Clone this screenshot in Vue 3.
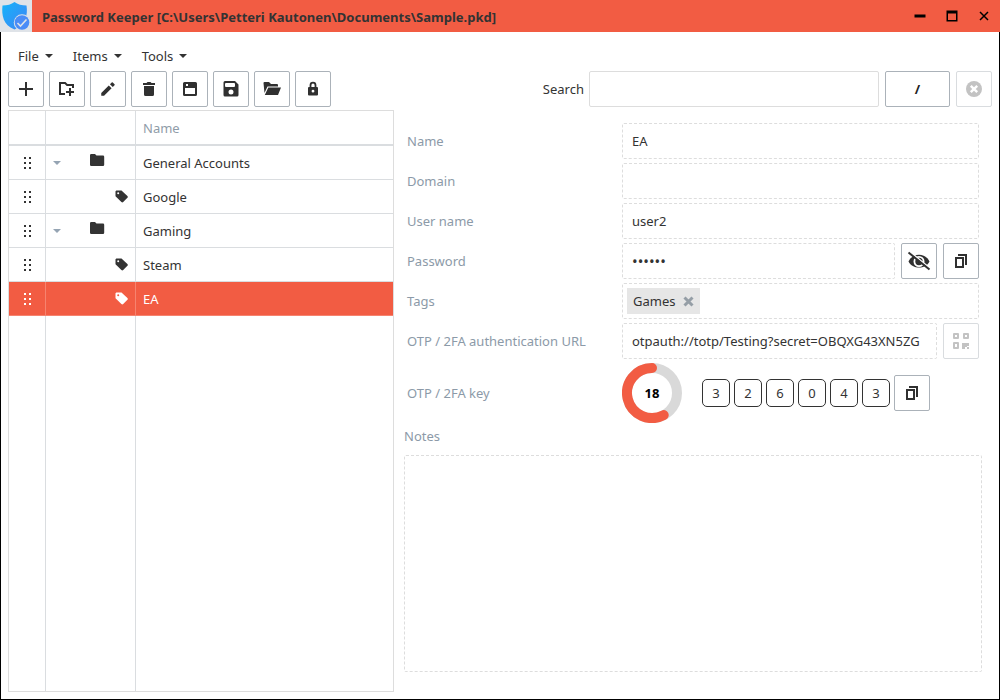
<script setup>
import { ref } from 'vue'

const menus = ['File', 'Items', 'Tools']
const tools = [
  { name: 'Add item', box: 20, size: 20, d: 'M9 3h2v6h6v2h-6v6H9v-6H3V9h6z' },
  { name: 'Add category', box: 20, size: 20, d: 'M2 3h6.500l2 2H17v4h-2V7H9.700l-2-2H4v9h4v2H2zM12 9h2v3h3v2h-3v3h-2v-3H9v-2h3z' },
  { name: 'Edit', box: 24, size: 18, d: 'M3 17.25V21h3.75L16.8 10.95 13.05 7.2 3 17.25zM20.7 7.05a1 1 0 0 0 0-1.4l-2.35-2.35a1 1 0 0 0-1.4 0l-2.35 2.35 3.75 3.75z' },
  { name: 'Delete', box: 20, size: 20, d: 'M4 4h3.500l1-1h3l1 1H16v2H4zM5 7h10v8.500a1.500 1.500 0 0 1-1.500 1.500h-7A1.500 1.500 0 0 1 5 15.500z' },
  { name: 'Save', box: 20, size: 20, d: 'M4.500 3h11A1.500 1.500 0 0 1 17 4.500v11a1.500 1.500 0 0 1-1.500 1.500h-11A1.500 1.500 0 0 1 3 15.500v-11A1.500 1.500 0 0 1 4.500 3zM5 9v6h10V9zM6 5v2h2V5z' },
  { name: 'Save as', box: 20, size: 20, d: 'M4 2h10l3.500 3.500V16a1.500 1.500 0 0 1-1.500 1.500H4A1.500 1.500 0 0 1 2.500 16V3.500A1.500 1.500 0 0 1 4 2zM5 4a1 1 0 0 0-1 1v2a1 1 0 0 0 1 1h8a1 1 0 0 0 1-1V5a1 1 0 0 0-1-1zM10 10.500a2.500 2.500 0 1 0 0 5 2.500 2.500 0 0 0 0-5z' },
  { name: 'Open', box: 20, size: 20, d: 'M1.500 4A1 1 0 0 1 2.500 3H7l2 2h6a1 1 0 0 1 1 1v1.500H5.500L2.500 14zM6.300 8.500H19L16 16H2.800z' },
  { name: 'Lock', box: 20, size: 20, d: 'M6.600 8V6.200a3.400 3.400 0 0 1 6.800 0V8h.6a1 1 0 0 1 1 1v6.500a1 1 0 0 1-1 1H6a1 1 0 0 1-1-1V9a1 1 0 0 1 1-1zM8.400 8h3.200V6.200a1.600 1.600 0 0 0-3.200 0zM10 10.800a1.400 1.400 0 1 0 0 2.800 1.400 1.400 0 0 0 0-2.800z' }
]
const rows = [
  { name: 'General Accounts', folder: true },
  { name: 'Google' },
  { name: 'Gaming', folder: true },
  { name: 'Steam' },
  { name: 'EA', selected: true }
]
const digits = ['3', '2', '6', '0', '4', '3']
const search = ref('')
const entry = ref({
  name: 'EA',
  domain: '',
  user: 'user2',
  password: 'secret',
  url: 'otpauth://totp/Testing?secret=OBQXG43XN5ZG',
  notes: ''
})
</script>

<template>
  <div class="window">
    <header class="titlebar">
      <span class="logo">
        <svg width="32" height="32" viewBox="0 0 32 32">
          <defs>
            <linearGradient id="shield" x1="0" y1="0" x2="1" y2="1">
              <stop offset="0" stop-color="#14b4fa" />
              <stop offset="1" stop-color="#4183f5" />
            </linearGradient>
          </defs>
          <path d="M14.500 2C11.500 4.500 7 5.500 2.500 5.500C1.500 15 3 25 14.500 29.500C25.500 25 28 15 26.500 5.500C22 5.500 17.500 4.500 14.500 2z" fill="url(#shield)" />
          <circle cx="22" cy="22.500" r="8.200" fill="#dfe3e8" />
          <circle cx="22" cy="22.500" r="7.300" fill="#4a8cf7" />
          <path class="stroke" d="M17.500 23l3 3 6-6.500" stroke="#dfe3e8" stroke-width="1.600" />
        </svg>
      </span>
      <h1>Password Keeper [C:\Users\Petteri Kautonen\Documents\Sample.pkd]</h1>
      <button class="sys" aria-label="Minimize"><svg width="12" height="12"><path d="M0.500 4.500h11v3h-11z" /></svg></button>
      <button class="sys" aria-label="Maximize"><svg width="12" height="12"><path d="M.5 .5h11v11H.5zM2 3.500v6.500h8v-6.500z" fill-rule="evenodd" /></svg></button>
      <button class="sys" aria-label="Close"><svg width="12" height="12"><path class="stroke" d="M2 2l8 8M10 2l-8 8" stroke="#000" stroke-width="1.500" /></svg></button>
    </header>

    <main class="body">
      <nav class="menu">
        <button v-for="m in menus" :key="m">{{ m }}<span class="caret"></span></button>
      </nav>

      <div class="toolbar">
        <button v-for="t in tools" :key="t.name" class="btn" :aria-label="t.name">
          <svg :width="t.size" :height="t.size" :viewBox="`0 0 ${t.box} ${t.box}`"><path :d="t.d" fill-rule="evenodd" /></svg>
        </button>
        <label class="search-label" for="search">Search</label>
        <input id="search" v-model="search" class="search" type="text" />
        <button class="btn slash">/</button>
        <button class="btn off" aria-label="Clear search" disabled>
          <svg width="16" height="16" viewBox="0 0 16 16"><circle cx="8" cy="8" r="8" /><path d="M4.800 4.800l6.400 6.400M11.200 4.800l-6.400 6.400" stroke="#fff" stroke-width="2.400" /></svg>
        </button>
      </div>

      <div class="panes">
        <div class="tree">
          <table>
            <colgroup><col class="c-drag" /><col class="c-icon" /><col /></colgroup>
            <thead><tr><th></th><th></th><th>Name</th></tr></thead>
            <tbody>
              <tr v-for="r in rows" :key="r.name" :class="{ selected: r.selected }">
                <td>
                  <svg class="grip" width="8" height="14" viewBox="0 0 8 14"><path d="M1 1h2v2H1zM6 1h2v2H6zM1 6h2v2H1zM6 6h2v2H6zM1 11h2v2H1zM6 11h2v2H6z" /></svg>
                </td>
                <td>
                  <div v-if="r.folder" class="kind">
                    <span class="caret pale"></span>
                    <svg width="15" height="20" viewBox="0 0 15 20"><path d="M0 2.200A1.200 1.200 0 0 1 1.200 1H5l1.500 1.500h6.500A1.200 1.200 0 0 1 14.200 3.700v8.100a1.200 1.200 0 0 1-1.200 1.200H1.200A1.200 1.200 0 0 1 0 11.800z" /></svg>
                  </div>
                  <div v-else class="kind leaf">
                    <svg width="13" height="13" viewBox="0 0 13 13"><path d="M1.300.5h5.200L12.400 6a1.300 1.300 0 0 1 0 1.800l-4.200 4.300a1.300 1.300 0 0 1-1.800 0L.5 6.300V1.300zM3.200 2.300a1 1 0 1 0 0 2 1 1 0 0 0 0-2z" fill-rule="evenodd" /></svg>
                  </div>
                </td>
                <td>{{ r.name }}</td>
              </tr>
              <tr class="rest"><td></td><td></td><td></td></tr>
            </tbody>
          </table>
        </div>

        <form class="detail" @submit.prevent>
          <div class="fields">
            <label for="name">Name</label>
            <div class="line"><input id="name" v-model="entry.name" type="text" /></div>
            <label for="domain">Domain</label>
            <div class="line"><input id="domain" v-model="entry.domain" type="text" /></div>
            <label for="user">User name</label>
            <div class="line"><input id="user" v-model="entry.user" type="text" /></div>
            <label for="password">Password</label>
            <div class="line">
              <input id="password" v-model="entry.password" type="password" />
              <button class="btn" type="button" aria-label="Show password">
                <svg width="24" height="20" viewBox="0 0 24 20"><path d="M1.500 10.500C5.500 1.500 18.500 1.500 22.500 10.500C18.500 18.500 5.500 18.500 1.500 10.500z" /><circle class="stroke" cx="12" cy="10.500" r="4.600" stroke="#fff" stroke-width="1.800" /><path d="M2.500 .5L23.500 17.500" stroke="#fff" stroke-width="1.600" /><path d="M1.500 1.500L22.500 18.500" stroke="#303030" stroke-width="2" /></svg>
              </button>
              <button class="btn" type="button" aria-label="Copy password">
                <svg width="14" height="16" viewBox="0 0 14 16"><path class="stroke" d="M2 5h7v9H2zM4 2h8v10" stroke="#303030" stroke-width="2" /></svg>
              </button>
            </div>
            <label for="tags">Tags</label>
            <div class="line">
              <div class="tags">
                <span class="tag">Games
                  <button type="button" aria-label="Remove Games"><svg width="11" height="11" viewBox="0 0 11 11"><path d="M1.500 1.500l8 8M9.500 1.500l-8 8" stroke="#959ea6" stroke-width="3" /></svg></button>
                </span>
                <input id="tags" type="text" />
              </div>
            </div>
            <label for="url">OTP / 2FA authentication URL</label>
            <div class="line">
              <input id="url" v-model="entry.url" type="text" />
              <button class="btn off" type="button" aria-label="QR code" disabled>
                <svg width="16" height="16" viewBox="0 0 16 16"><path d="M1 0h4a1 1 0 0 1 1 1v4a1 1 0 0 1-1 1H1a1 1 0 0 1-1-1V1a1 1 0 0 1 1-1zM2 2v2h2V2zM11 0h4a1 1 0 0 1 1 1v4a1 1 0 0 1-1 1h-4a1 1 0 0 1-1-1V1a1 1 0 0 1 1-1zM12 2v2h2V2zM1 9h4a1 1 0 0 1 1 1v5a1 1 0 0 1-1 1H1a1 1 0 0 1-1-1v-5a1 1 0 0 1 1-1zM2 11v3h2v-3zM9 10h7v3h-2v1h-2v2H9zM14 14h2v2h-2z" fill-rule="evenodd" /></svg>
              </button>
            </div>
            <span class="caption">OTP / 2FA key</span>
            <div class="otp">
              <svg width="60" height="60" viewBox="0 0 60 60">
                <circle class="stroke" cx="30" cy="30" r="25" stroke="#d9d9d9" stroke-width="10" />
                <path class="stroke" d="M30 5A25 25 0 1 0 41.700 52.100" stroke="#f25c43" stroke-width="10" stroke-linecap="round" />
                <text x="30" y="35" text-anchor="middle" class="count">18</text>
              </svg>
              <div class="digits"><span v-for="(n, i) in digits" :key="i">{{ n }}</span></div>
              <button class="btn" type="button" aria-label="Copy key">
                <svg width="14" height="16" viewBox="0 0 14 16"><path class="stroke" d="M2 5h7v9H2zM4 2h8v10" stroke="#303030" stroke-width="2" /></svg>
              </button>
            </div>
          </div>
          <label class="notes-label" for="notes">Notes</label>
          <textarea id="notes" v-model="entry.notes"></textarea>
        </form>
      </div>
    </main>
  </div>
</template>

<style>
body { margin: 0; background: #fff; }
</style>

<style scoped>
* { box-sizing: border-box; }
.window {
  display: flex;
  flex-direction: column;
  height: 100vh;
  color: #333;
  font: 13px/20px "Noto Sans", "Open Sans", sans-serif;
}
button, input, textarea { font: inherit; color: inherit; }
button { padding: 0; border: 0; background: none; }
svg { display: block; flex: none; fill: currentColor; }
.stroke { fill: none; }
.titlebar { display: flex; align-items: center; height: 32px; flex: none; background: #f25c43; color: #333; }
.logo { width: 32px; background: #dfe3e8; margin-right: 10px; }
.titlebar h1 { flex: 1; margin: 0; font-size: 13px; line-height: 20px; font-weight: 700; white-space: nowrap; padding-top: 2px; }
.sys { display: flex; align-items: center; justify-content: center; width: 32px; height: 32px; color: #000; }
.body {
  flex: 1;
  min-height: 0;
  display: flex;
  flex-direction: column;
  border: 1px solid #000;
  border-top: 0;
  padding: 14px 7px 7px;
}
.menu { display: flex; gap: 20px; padding: 0 10px; height: 25px; flex: none; }
.menu button { display: flex; align-items: center; gap: 6px; height: 20px; }
.caret { border: 4px solid transparent; border-top-color: currentColor; border-bottom: 0; }
.toolbar { display: flex; align-items: center; gap: 5px; flex: none; }
.btn {
  display: flex;
  align-items: center;
  justify-content: center;
  flex: none;
  width: 36px;
  height: 36px;
  border: 1px solid #abb2b9;
  border-radius: 2px;
  color: #303030;
  background: #fff;
}
.btn.off { border-color: #d9dcdf; color: #c3c3c3; }
.search-label { margin-left: auto; }
.search { width: 290px; height: 36px; border: 1px solid #ddd; border-radius: 2px; padding: 0 9px; }
.slash { width: 65px; margin: 0 1px; font-weight: 700; color: #222; }
.panes { flex: 1; min-height: 0; display: grid; grid-template-columns: 386fr 598fr; margin-top: 3px; }
.tree { border: 1px solid #ddd; min-width: 0; }
table { width: 100%; height: 100%; table-layout: fixed; border-collapse: separate; border-spacing: 0; }
.c-drag { width: 37px; }
.c-icon { width: 90px; }
th, td { height: 34px; padding: 0 7px; text-align: left; font-weight: 400; border-right: 1px solid #dadde0; border-bottom: 1px solid #dadde0; }
th { height: 35px; color: #8f9ca8; border-bottom: 2px solid #dadde0; }
th:last-child, td:last-child { border-right: 0; }
.rest td { height: auto; border-bottom: 0; }
.selected td { background: #f25c43; color: #fff; border-color: #f6836f; }
.grip { margin: 0 auto; }
.kind { display: flex; align-items: center; gap: 29px; }
.leaf { justify-content: flex-end; }
.pale { color: #95a4b3; }
.detail { display: flex; flex-direction: column; min-width: 0; padding: 13px 10px 20px; }
.fields { display: grid; grid-template-columns: 215px 1fr; row-gap: 4px; align-items: center; padding: 0 3px; }
label, .caption { color: #8c9aa8; }
.search-label { color: #333; }
.line { display: flex; gap: 6px; min-width: 0; }
.line > input, .tags {
  flex: 1;
  min-width: 0;
  height: 36px;
  padding: 0 9px;
  border: 1px dashed #ddd;
  border-radius: 2px;
  background: #fff;
}
#password { font-size: 15px; }
.tags { display: flex; align-items: center; padding: 0 4px; }
.tags input { flex: 1; min-width: 0; border: 0; }
.tag { display: flex; align-items: center; gap: 8px; height: 26px; padding: 0 6px; background: #e6e6e6; }
.otp { display: flex; align-items: center; }
.count { font-weight: 700; fill: #000; }
.digits { display: flex; gap: 4px; margin: 0 4px 0 20px; }
.digits span { width: 28px; height: 28px; line-height: 26px; text-align: center; border: 1px solid #333; border-radius: 5px; }
.notes-label { margin: 3px 0 9px; }
textarea { flex: 1; resize: none; border: 1px dashed #ddd; border-radius: 2px; padding: 8px; }
</style>
